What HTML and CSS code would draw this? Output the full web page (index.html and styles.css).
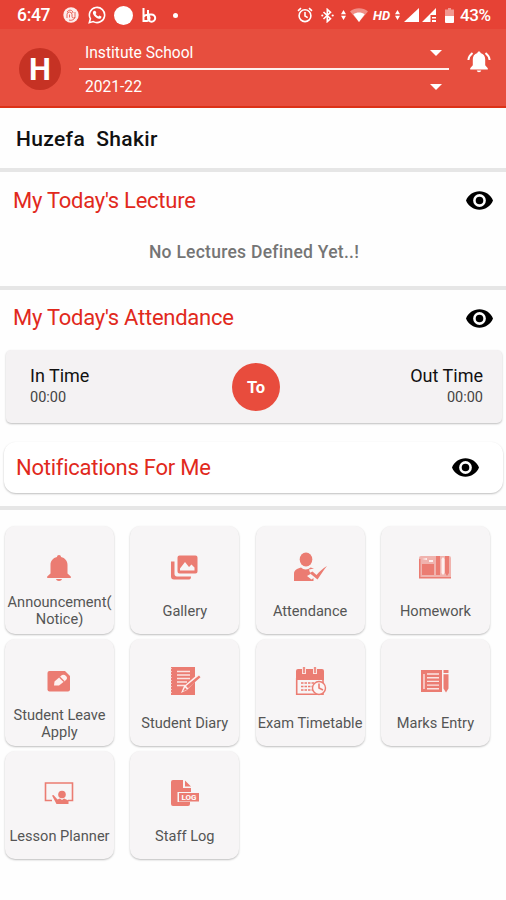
FILE: index.html
```html
<!DOCTYPE html>
<html lang="en">
<head>
    <meta charset="UTF-8">
    <meta name="viewport" content="width=device-width, initial-scale=1.0">
    <title>Institute School</title>
    <link rel="stylesheet" href="styles.css">
</head>
<body>
    <!-- shared icons -->
    <svg class="sprite">
        <symbol id="eye" viewBox="1 4.5 22 15">
            <path fill-rule="evenodd" d="M12 4.5C7 4.5 2.73 7.61 1 12c1.73 4.39 6 7.5 11 7.5s9.27-3.11 11-7.5c-1.73-4.39-6-7.5-11-7.5zM12 17.2a5.2 5.2 0 1 1 0-10.4 5.200 5.200 0 0 1 0 10.400zM12 8.900a3.100 3.100 0 1 0 0 6.200 3.100 3.100 0 0 0 0-6.200z"/>
        </symbol>
        <symbol id="updown" viewBox="0 0 6 12">
            <path d="M3 0l3 5H0zM3 12l3-5H0z"/>
        </symbol>
    </svg>

    <div class="status-bar">
        <div class="status-left">
            <span class="clock">6:47</span>
            <svg class="icon" width="16" height="16" viewBox="0 0 16 16">
                <circle cx="8" cy="8" r="7.7" opacity=".9"/>
                <path class="cut" d="M4 11V7.500a2.500 2.500 0 0 1 5 0v2a1.500 1.500 0 0 0 3 0V5M6 13c3 1 6-1 6-3M4 5c2-3 6-2 6 1M6.500 7.500v3"/>
            </svg>
            <svg class="icon" width="18" height="18" viewBox="0 0 18 18">
                <path class="line" d="M1.300 16.700l1.100-4A7.600 7.600 0 1 1 5.300 15.600z"/>
                <path d="M6.300 4.800l1.200.1.900 2-.8 1.100c.7 1.300 1.500 2 2.800 2.500l1-1.100 2 1c.2 1.400-1 2.500-2.400 2.300C8 12.300 5.200 9.300 4.900 7c0-1 .6-1.900 1.400-2.200z"/>
            </svg>
            <span class="dot-big"></span>
            <svg class="icon" width="15" height="15" viewBox="0 0 15 15">
                <path class="line thick" d="M1.500 0v13h3.500a3 3 0 1 0-3-4.500M6 2v8a3.600 3.600 0 1 0 3.500-3.500H5"/>
            </svg>
            <span class="dot-small"></span>
        </div>
        <div class="status-right">
            <svg class="icon alarm" width="16" height="16" viewBox="0 0 16 16">
                <circle class="line" cx="8" cy="8.700" r="5.900"/>
                <path class="line" d="M8 5v4l2.700 1.600M1 3.800l3-2.600M15 3.800l-3-2.600"/>
            </svg>
            <svg class="icon bluetooth" width="13" height="15" viewBox="0 0 13 15">
                <path class="line" d="M2.500 4l7 6.700L6.300 13.600V1.400l3.200 2.900-7 6.700"/>
                <circle cx="1.300" cy="7.500" r="1.100"/><circle cx="11.700" cy="7.500" r="1.100"/>
            </svg>
            <svg class="icon arrows" width="5" height="12"><use href="#updown"/></svg>
            <svg class="icon wifi" width="18" height="14" viewBox="0 0 18 14">
                <path opacity=".4" d="M9 14L0 3.500C5-.800 13-.800 18 3.500z"/>
                <path d="M9 14L3.300 6.200c3.500-2.400 8-2.400 11.400 0z"/>
            </svg>
            <span class="hd">HD</span>
            <svg class="icon arrows" width="5" height="12"><use href="#updown"/></svg>
            <svg class="icon signal" width="15" height="14" viewBox="0 0 15 14"><path d="M15 0v14H0z"/></svg>
            <svg class="icon signal-two" width="15" height="14" viewBox="0 0 15 14">
                <path d="M14 0v7H8.500v7H0z"/><path d="M10 9h4v1.500h-4zM10 12h4v2h-4z"/>
            </svg>
            <svg class="icon battery" width="9" height="15" viewBox="0 0 9 15">
                <path opacity=".45" d="M3 0h3v1.500h3V9H0V1.500h3z"/><path d="M0 8h9v6a1 1 0 0 1-1 1H1a1 1 0 0 1-1-1z"/>
            </svg>
            <span class="percent">43%</span>
        </div>
    </div>

    <header class="header">
        <div class="avatar">H</div>
        <div class="selects">
            <div class="select">Institute School<span class="caret"></span></div>
            <div class="select select-year">2021-22<span class="caret"></span></div>
        </div>
        <svg class="icon bell" width="24" height="22" viewBox="0 0 24 22">
            <path d="M12 .500c1 0 1.600.700 1.600 1.500 3 .8 4.600 3.300 4.600 6.300v6l2.600 3v1.200H3.200v-1.200l2.600-3v-6c0-3 1.600-5.500 4.600-6.300 0-.8.600-1.500 1.600-1.500zM9.800 19.500h4.400c-.3 2.200-4.100 2.200-4.400 0z"/>
            <path class="line thick" d="M5.500 2C3 4 1.600 6 1.400 9M18.500 2c2.500 2 3.900 4 4.100 7"/>
        </svg>
    </header>

    <div class="user-name">Huzefa&nbsp; Shakir</div>

    <section class="lecture">
        <div class="section-head">
            <h2>My Today's Lecture</h2>
            <svg class="eye"><use href="#eye"/></svg>
        </div>
        <p class="empty">No Lectures Defined Yet..!</p>
    </section>

    <section class="attendance">
        <div class="section-head">
            <h2>My Today's Attendance</h2>
            <svg class="eye"><use href="#eye"/></svg>
        </div>
        <div class="time-card">
            <div class="time">
                <div class="time-label">In Time</div>
                <div class="time-value">00:00</div>
            </div>
            <div class="to">To</div>
            <div class="time time-out">
                <div class="time-label">Out Time</div>
                <div class="time-value">00:00</div>
            </div>
        </div>
        <div class="notifications">
            <h2>Notifications For Me</h2>
            <svg class="eye"><use href="#eye"/></svg>
        </div>
    </section>

    <main class="menu">
        <div class="tile">
            <svg viewBox="0 0 32 32">
                <path d="M16 3c1.200 0 2 .8 2 2 4.200 1 6.500 4 6.500 8v8.500l3.300 3V26H4.200v-1.500l3.300-3V13c0-4 2.300-7 6.500-8 0-1.200.800-2 2-2zM13 27h6c-.4 2.600-5.600 2.600-6 0z"/>
            </svg>
            <span class="label">Announcement(<br>Notice)</span>
        </div>
        <div class="tile">
            <svg viewBox="0 0 32 32">
                <path fill-rule="evenodd" d="M11.500 3.500h16a2 2 0 0 1 2 2v14a2 2 0 0 1-2 2h-16a2 2 0 0 1-2-2v-14a2 2 0 0 1 2-2zm.5 15h14.500v-3l-3-3-2.500 2.500-4-5-5 6.500z"/>
                <path d="M3 9.500h3.500V22c0 1.500 1 2.500 2.500 2.500h14c0 2-.500 3-2 3H6c-2 0-3-1-3-3z"/>
            </svg>
            <span class="label">Gallery</span>
        </div>
        <div class="tile">
            <svg viewBox="0 0 32 32">
                <ellipse cx="12" cy="7.500" rx="6.300" ry="7"/>
                <path d="M0 29v-7c0-4 3-5.500 7-6.500 2.500 2.500 7 2.500 9.500 0l3.500 1-5 1 1.500 4.500-3.500 2 4.500 3.500 2-1.500v3z"/>
                <path d="M15.500 21l3-1.500 4 3.500c3-3.500 6-6.500 10.500-9-4 5-6.500 9-9.500 13.500z"/>
            </svg>
            <span class="label">Attendance</span>
        </div>
        <div class="tile">
            <svg viewBox="0 0 32 32">
                <path opacity=".55" d="M0 6q0-2 2-2h28q2 0 2 2v20H0z"/>
                <path d="M3 12h12v11H3zM17 4h4v19h-4zM26 4h4v17l-2 3-2-3zM0 25h32v1.500H0zM0 7h1.500v19H0z"/>
                <path class="pale" d="M22.500 7l1.500-2 1.500 2v14l-1.500 2-1.500-2zM3 7l5-1v2zM10 8h4v2h-4z"/>
            </svg>
            <span class="label">Homework</span>
        </div>
        <div class="tile">
            <svg viewBox="0 0 32 32">
                <path d="M6.500 6H22l5 5v13.500a2 2 0 0 1-2 2H6.500a2 2 0 0 1-2-2V8a2 2 0 0 1 2-2z"/>
                <path class="pale" d="M11 20.500l.5-4L19 10q2-1 4 1t0 4l-7 5.500z"/>
                <path d="M17 11.500l4.500 4.500-1 1-4.500-4.500z"/>
            </svg>
            <span class="label">Student Leave<br>Apply</span>
        </div>
        <div class="tile">
            <svg viewBox="0 0 32 32">
                <path d="M3 2h24v28H3z"/>
                <path class="pale-line" d="M3 3v26" stroke-dasharray="1 2"/>
                <path class="pale-line" d="M9 6.500h13M9 10h13M9 13.500h13M9 17h10M9 20.500h8"/>
                <path class="pale" d="M13 28l3-7L29.500 9.500l2.500 2L19 25z"/>
                <path d="M15 26.500l2-4 2 2zM18 21l13-10.500 1.500 1.700-12.500 11z"/>
            </svg>
            <span class="label">Student Diary</span>
        </div>
        <div class="tile">
            <svg viewBox="0 0 32 32">
                <path d="M2 6q0-2 2-2h24q2 0 2 2v9H2z"/>
                <path class="thin" d="M2.700 13v16.300H29V13"/>
                <path class="pale-line wide" d="M10 2v7M21 2v7"/>
                <path class="thin" d="M10 2v6M21 2v6"/>
                <path class="thin" stroke-dasharray="2.500 1" d="M7 18h14M7 21.500h13M7 25h12"/>
                <circle class="clock-face" cx="25" cy="23" r="6.500"/>
                <path class="thin" d="M25 18.500V23l4 2"/>
            </svg>
            <span class="label">Exam Timetable</span>
        </div>
        <div class="tile">
            <svg viewBox="0 0 32 32">
                <path d="M2 5h21v22H2z"/>
                <path class="pale-line" d="M5 9v15M8 9h12M8 12.700h12M8 16.400h12M8 20.100h12M8 23.800h12"/>
                <path d="M24.500 5h5v3h-5zM24.500 9.200h5V23.500L27 27.500l-2.500-4z"/>
            </svg>
            <span class="label">Marks Entry</span>
        </div>
        <div class="tile">
            <svg viewBox="0 0 32 32">
                <path class="thin" d="M9 23.500H2.500V6h27v17.500H25"/>
                <circle cx="19" cy="17.500" r="3.800"/>
                <path d="M9 18.500l1.500-.5 4 4.500 2.500-1 2 1.500 2-1.500 4.500 2V27H13.500z"/>
            </svg>
            <span class="label">Lesson Planner</span>
        </div>
        <div class="tile">
            <svg viewBox="0 0 32 32">
                <path d="M5 3h10v8h8v4H9.500v10H22v2q0 2-2 2H5q-2 0-2-2V5q0-2 2-2zM17 3.500l6 6h-6z"/>
                <rect x="11" y="16" width="20" height="8.500"/>
                <text class="log" x="21" y="23">LOG</text>
            </svg>
            <span class="label">Staff Log</span>
        </div>
    </main>
</body>
</html>
```
FILE: styles.css
```css
* {
    box-sizing: border-box;
}

body {
    margin: 0;
    background: #fefefe;
    font-family: Roboto, "Liberation Sans", sans-serif;
    color: #111;
}

h2 {
    margin: 0;
    font-size: 22px;
    font-weight: 400;
    letter-spacing: -.25px;
    line-height: 26px;
    color: #e1291c;
}

.sprite {
    position: absolute;
    width: 0;
    height: 0;
}

.icon {
    display: block;
    fill: #fff;
    flex: none;
}

.line {
    fill: none;
    stroke: #fff;
    stroke-width: 1.6;
}

.thick {
    stroke-width: 2;
}

.cut {
    fill: none;
    stroke: #e64235;
    stroke-width: .8;
}

/* status bar */
.status-bar {
    display: flex;
    justify-content: space-between;
    height: 29px;
    padding: 1px 15px 0 17px;
    background: #e64235;
    color: #fff;
    font-size: 17.5px;
    font-weight: 500;
}

.status-left,
.status-right {
    display: flex;
    align-items: center;
}

.clock {
    width: 46px;
    letter-spacing: -.3px;
}

.status-left .icon {
    margin-right: 9px;
}

.dot-big {
    width: 19px;
    height: 19px;
    margin: 0 9px 0 -1px;
    border-radius: 50%;
    background: #fff;
}

.dot-small {
    width: 5px;
    height: 5px;
    margin-left: 7px;
    border-radius: 50%;
    background: #fff;
}

.alarm { margin-right: 8px; }
.bluetooth { margin-right: 7px; }
.wifi { margin: 0 5px 0 4px; }

.hd {
    width: 18px;
    margin-right: 4px;
    font-size: 13px;
    font-style: italic;
    font-weight: 700;
}

.signal { margin: 0 3px 0 4px; }
.battery { margin: 0 6px 0 8px; }

.percent {
    width: 31px;
    font-size: 17px;
    letter-spacing: -.4px;
}

/* header */
.header {
    display: flex;
    height: 79px;
    padding-left: 19px;
    background: #e74e3e;
    border-bottom: 2px solid #dc3218;
}

.avatar {
    width: 42px;
    height: 42px;
    margin-top: 19px;
    border-radius: 50%;
    background: #c63224;
    color: #fff;
    font-size: 31px;
    font-weight: 700;
    line-height: 43px;
    text-align: center;
}

.selects {
    width: 370px;
    margin: 8px 18px 0 18px;
}

.select {
    display: flex;
    align-items: center;
    justify-content: space-between;
    height: 33px;
    padding: 0 7px 0 6px;
    border-bottom: 2px solid #fff0ed;
    color: #fff;
    font-size: 15.6px;
}

.select-year {
    border-bottom: 0;
}

.caret {
    border: 6px solid transparent;
    border-top-color: #fff;
    border-bottom: 0;
}

.bell {
    margin-top: 22px;
}

.user-name {
    height: 64px;
    padding: 17px 16px 0;
    border-bottom: 4px solid #e6e6e6;
    font-size: 21px;
    font-weight: 500;
    letter-spacing: .35px;
    line-height: 29px;
}

/* sections */
.section-head {
    display: flex;
    justify-content: space-between;
    padding: 15px 13px 0;
}

.eye {
    width: 27px;
    height: 19px;
    margin-top: 4px;
    fill: #000;
}

.lecture {
    height: 118px;
    padding-top: 1px;
    border-bottom: 4px solid #e6e6e6;
}

.lecture .eye {
    margin-top: 3px;
}

.empty {
    margin: 26px 0 0;
    padding-left: 2px;
    color: #757575;
    font-size: 17.5px;
    font-weight: 500;
    letter-spacing: .26px;
    line-height: 24px;
    text-align: center;
}

.attendance {
    height: 220px;
    border-bottom: 4px solid #e6e6e6;
}

.time-card {
    display: flex;
    align-items: center;
    justify-content: space-between;
    height: 73px;
    margin: 19px 4px 0 6px;
    padding: 0 19px 0 24px;
    border-radius: 5px;
    background: #f4f2f3;
    box-shadow: 0 1px 2px rgba(0, 0, 0, .25);
}

.time {
    width: 100px;
}

.time-out {
    text-align: right;
}

.time-label {
    font-size: 18px;
    line-height: 22px;
}

.time-value {
    color: #444;
    font-size: 14.5px;
    line-height: 21px;
}

.to {
    width: 48px;
    height: 48px;
    margin-right: 1px;
    border-radius: 50%;
    background: #e84c3d;
    color: #fff;
    font-size: 16.5px;
    font-weight: 700;
    line-height: 49px;
    text-align: center;
}

.notifications {
    display: flex;
    justify-content: space-between;
    height: 51px;
    margin: 19px 3px 0 4px;
    padding: 13px 24px 0 12px;
    border-radius: 12px;
    background: #fff;
    box-shadow: 0 1px 2px rgba(0, 0, 0, .25);
}

.notifications .eye {
    margin-top: 3px;
}

/* menu tiles */
.menu {
    display: grid;
    grid-template-columns: repeat(4, 109px);
    gap: 5px 16.300px;
    padding: 16px 0 39px 5px;
}

.tile {
    display: flex;
    flex-direction: column;
    align-items: center;
    height: 107.500px;
    padding-top: 26px;
    border-radius: 10px;
    background: #f7f5f6;
    box-shadow: 0 1px 2px rgba(0, 0, 0, .25);
}

.tile svg {
    width: 32px;
    height: 32px;
    margin-left: -1px;
    fill: #eb7c72;
    overflow: visible;
}

.tile .pale {
    fill: #fdf0ef;
}

.tile .pale-line {
    fill: none;
    stroke: #fbe4e2;
    stroke-width: 1.4;
}

.tile .wide {
    stroke-width: 4;
}

.tile .thin {
    fill: none;
    stroke: #eb7c72;
    stroke-width: 1.6;
}

.tile .clock-face {
    fill: #fbf5f5;
    stroke: #eb7c72;
    stroke-width: 1.4;
}

.tile .log {
    fill: #fff;
    font-size: 8px;
    font-weight: 700;
    text-anchor: middle;
}

.label {
    display: flex;
    align-items: center;
    height: 36px;
    margin-top: 9px;
    color: #555;
    font-size: 14.6px;
    line-height: 17px;
    text-align: center;
    white-space: nowrap;
}
```
